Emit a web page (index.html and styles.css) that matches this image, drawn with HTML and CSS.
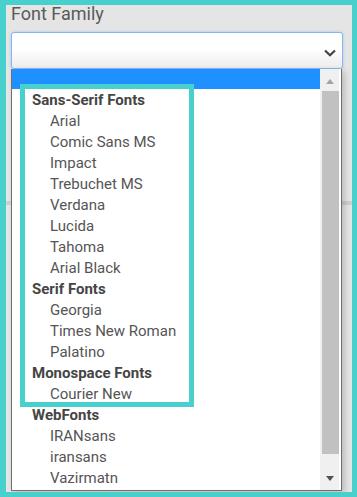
FILE: index.html
```html
<!DOCTYPE html>
<html>
<head>
<meta charset="utf-8">
<link rel="stylesheet" href="styles.css">
</head>
<body>
<div class="frame">
  <div class="label">Font Family</div>
  <div class="field">
    <div class="select">
      <svg class="chev" width="12" height="8" viewBox="0 0 12 8"><path d="M1 1.5 L6 6.3 L11 1.5" fill="none" stroke="#444" stroke-width="2.2"/></svg>
    </div>
    <div class="list">
      <div class="options">
        <div class="opt selected"></div>
        <div class="grp">Sans-Serif Fonts</div>
        <div class="opt">Arial</div>
        <div class="opt">Comic Sans MS</div>
        <div class="opt">Impact</div>
        <div class="opt">Trebuchet MS</div>
        <div class="opt">Verdana</div>
        <div class="opt">Lucida</div>
        <div class="opt">Tahoma</div>
        <div class="opt">Arial Black</div>
        <div class="grp">Serif Fonts</div>
        <div class="opt">Georgia</div>
        <div class="opt">Times New Roman</div>
        <div class="opt">Palatino</div>
        <div class="grp">Monospace Fonts</div>
        <div class="opt">Courier New</div>
        <div class="grp">WebFonts</div>
        <div class="opt">IRANsans</div>
        <div class="opt">iransans</div>
        <div class="opt">Vazirmatn</div>
      </div>
      <div class="scrollbar">
        <div class="btn-up"><span class="tri-up"></span></div>
        <div class="thumb"></div>
        <div class="btn-down"><span class="tri-down"></span></div>
      </div>
      <div class="mark"></div>
    </div>
  </div>
  <div class="page-rule"></div>
</div>
</body>
</html>
```

FILE: styles.css
```css
html, body {
  margin: 0;
  padding: 0;
}
body {
  width: 357px;
  height: 497px;
  overflow: hidden;
  font-family: Roboto, "Liberation Sans", sans-serif;
}
.frame {
  box-sizing: border-box;
  width: 357px;
  height: 497px;
  border-style: solid;
  border-color: #48d1cc;
  border-width: 5px 5px 5px 6px;
  background: #e5e5e5;
  padding: 0 9px 0 5px;
  overflow: hidden;
}
.label {
  font-size: 18px;
  line-height: 17px;
  color: #5a5a5a;
}
.field {
  position: relative;
  margin-top: 10px;
}
.select {
  box-sizing: border-box;
  height: 37px;
  width: 332px;
  border: 1px solid #86b6ea;
  border-radius: 3px;
  background: linear-gradient(#ffffff 45%, #ececec);
  box-shadow: 0 0 3px rgba(100, 160, 230, 0.45);
  display: flex;
  align-items: center;
  justify-content: flex-end;
  padding: 5px 6px 0 0;
}
.chev {
  display: block;
}
.list {
  position: absolute;
  top: 37px;
  left: 0;
  width: 331px;
  height: 422px;
  box-sizing: border-box;
  background: #fff;
  border: 1px solid #6e6e6e;
  border-top: 0;
  box-shadow: 3px 2px 6px rgba(0, 0, 0, 0.18);
  display: flex;
  z-index: 2;
}
.options {
  flex: 1;
  overflow: hidden;
}
.opt, .grp {
  height: 21px;
  line-height: 21px;
  font-size: 15px;
  white-space: nowrap;
}
.opt {
  padding-left: 38px;
  color: #555;
}
.grp {
  padding-left: 20px;
  font-weight: bold;
  color: #454545;
}
.opt.selected {
  background: #1e90ff;
  height: 20px;
  margin-bottom: 1px;
}
.scrollbar {
  width: 19px;
  margin-right: 2px;
  background: #f0f0f0;
  display: flex;
  flex-direction: column;
}
.btn-up {
  height: 22px;
  display: flex;
  justify-content: center;
  padding-top: 10px;
  box-sizing: border-box;
}
.tri-up {
  width: 0;
  height: 0;
  border-left: 4.5px solid transparent;
  border-right: 4.5px solid transparent;
  border-bottom: 5px solid #a3a3a3;
}
.thumb {
  height: 363px;
  margin-left: 2px;
  background: #c1c1c1;
}
.btn-down {
  flex: 1;
  display: flex;
  justify-content: center;
  align-items: flex-end;
  padding-bottom: 9px;
}
.tri-down {
  width: 0;
  height: 0;
  border-left: 4.5px solid transparent;
  border-right: 4.5px solid transparent;
  border-top: 5px solid #505050;
}
.mark {
  position: absolute;
  left: 8px;
  top: 15px;
  width: 174px;
  height: 323px;
  box-sizing: border-box;
  border: 5px solid #48d1cc;
}
.page-rule {
  margin-top: 132px;
  height: 4px;
  background: #cfcfcf;
  margin-left: -5px;
  margin-right: -9px;
}
```
